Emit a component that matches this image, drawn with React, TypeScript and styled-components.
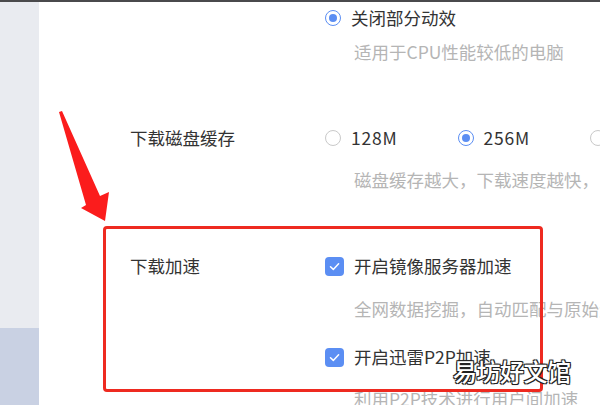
import styled, { createGlobalStyle } from "styled-components";

const GlobalStyle = createGlobalStyle`
    html, body {
        margin: 0;
        padding: 0;
        background: #fff;
    }
    body {
        width: 600px;
        height: 405px;
        overflow: hidden;
        font-family: "Noto Sans CJK SC", "Noto Sans", sans-serif;
    }
`

interface Option {
    label: string,
    checked: boolean,
}

const cacheOptions: Option[] = [
    {label: "128M", checked: false},
    {label: "256M", checked: true},
    {label: "512M", checked: false},
]

function Radio({checked}: {checked: boolean}) {
    return <RadioCircle $checked={checked}>{checked && <RadioDot/>}</RadioCircle>
}

function Checkbox() {
    return <CheckBox>
        <svg width="13" height="13" viewBox="0 0 13 13">
            <path d="M2.5 6.8 L5.3 9.4 L10.6 3.8" fill="none" stroke="#fff" strokeWidth="1.5" strokeLinecap="round" strokeLinejoin="round"/>
        </svg>
    </CheckBox>
}

export default function App() {
    return <Page>
        <GlobalStyle/>
        <TopBar/>
        <Body>
            <Sidebar>
                <SideTop/>
                <SideBottom/>
            </Sidebar>
            <Main>
                <Section>
                    <Label/>
                    <Content>
                        <OptionRow>
                            <OptionItem><Radio checked/><span>关闭部分动效</span></OptionItem>
                        </OptionRow>
                        <Desc $gap={10}>适用于CPU性能较低的电脑</Desc>
                    </Content>
                </Section>
                <Section>
                    <Label>下载磁盘缓存</Label>
                    <Content>
                        <OptionRow>
                            {cacheOptions.map(o => <OptionItem key={o.label}>
                                <Radio checked={o.checked}/><Latin>{o.label}</Latin>
                            </OptionItem>)}
                        </OptionRow>
                        <Desc $gap={18}>磁盘缓存越大，下载速度越快，占用内存越多</Desc>
                    </Content>
                </Section>
                <Section>
                    <Label>下载加速</Label>
                    <Content>
                        <OptionRow>
                            <OptionItem><Checkbox/><span>开启镜像服务器加速</span></OptionItem>
                        </OptionRow>
                        <Desc $gap={19}>全网数据挖掘，自动匹配与原始资源相同的服务器</Desc>
                        <OptionRow $gap={24}>
                            <OptionItem><Checkbox/><span>开启迅雷P2P加速</span></OptionItem>
                        </OptionRow>
                        <Desc $gap={18}>利用P2P技术进行用户间加速</Desc>
                    </Content>
                </Section>
            </Main>
        </Body>

        <Arrow width="60" height="120" viewBox="0 0 60 120">
            <polygon points="4,7 7,6 45,91 54,87 50,116 26,103 31,100" fill="#fb1c1c"/>
        </Arrow>
        <Highlight/>
        <Watermark>易坊好文馆</Watermark>
    </Page>
}

const Page = styled.div`
    position: relative;
    width: 600px;
    height: 405px;
    overflow: hidden;
    display: flex;
    flex-direction: column;
    background: #fff;
`

const TopBar = styled.div`
    flex: 0 0 2px;
    background: #4a4a4c;
`

const Body = styled.div`
    flex: 1;
    display: flex;
    min-height: 0;
`

const Sidebar = styled.div`
    flex: 0 0 39px;
    display: flex;
    flex-direction: column;
`

const SideTop = styled.div`
    flex: 0 0 326px;
    background: #e9ebf0;
`

const SideBottom = styled.div`
    flex: 1;
    background: #c9d1e3;
`

const Main = styled.div`
    flex: 1;
    padding: 4px 0 0 91px;
    display: flex;
    flex-direction: column;
    gap: 62px;
    overflow: hidden;
`

const Section = styled.div`
    display: grid;
    grid-template-columns: 195px 1fr;
    min-width: 0;
`

const Label = styled.div`
    font-size: 17.5px;
    line-height: 24px;
    color: #333;
    white-space: nowrap;
`

const Content = styled.div`
    display: flex;
    flex-direction: column;
    min-width: 0;
`

const OptionRow = styled.div<{ $gap?: number }>`
    display: flex;
    gap: 60px;
    height: 24px;
    margin-top: ${p => p.$gap ?? 0}px;
    white-space: nowrap;
`

const OptionItem = styled.div`
    display: flex;
    align-items: center;
    gap: 10px;
    font-size: 17.5px;
    line-height: 24px;
    color: #333;
`

const Latin = styled.span`
    letter-spacing: 0.8px;
`

const RadioCircle = styled.span<{ $checked: boolean }>`
    box-sizing: border-box;
    width: 16px;
    height: 16px;
    border-radius: 50%;
    border: 1.5px solid ${p => p.$checked ? "#5b8ef3" : "#c9c9c9"};
    display: flex;
    align-items: center;
    justify-content: center;
    flex-shrink: 0;
    background: #fff;
`

const RadioDot = styled.span`
    width: 8px;
    height: 8px;
    border-radius: 50%;
    background: #5b8ef3;
`

const CheckBox = styled.span`
    width: 19px;
    height: 19px;
    border-radius: 4px;
    background: #5b8ef3;
    display: flex;
    align-items: center;
    justify-content: center;
    flex-shrink: 0;
`

const Desc = styled.div<{ $gap: number }>`
    margin-top: ${p => p.$gap}px;
    padding-left: 29px;
    font-size: 17.5px;
    line-height: 24px;
    color: #b5b5b5;
    white-space: nowrap;
`

const Arrow = styled.svg`
    position: absolute;
    left: 55px;
    top: 105px;
`

const Highlight = styled.div`
    position: absolute;
    left: 103px;
    top: 226px;
    width: 434px;
    height: 160px;
    border: 3px solid #ee2a20;
    border-radius: 4px;
`

const Watermark = styled.div`
    position: absolute;
    left: 453px;
    top: 356px;
    font-size: 24px;
    line-height: 30px;
    font-weight: 500;
    color: #fff;
    letter-spacing: -0.5px;
    text-shadow: -1px -1px 0 #222, 1px -1px 0 #222, -1px 1px 0 #222, 1px 1px 0 #222, 0 0 2px #222;
`
